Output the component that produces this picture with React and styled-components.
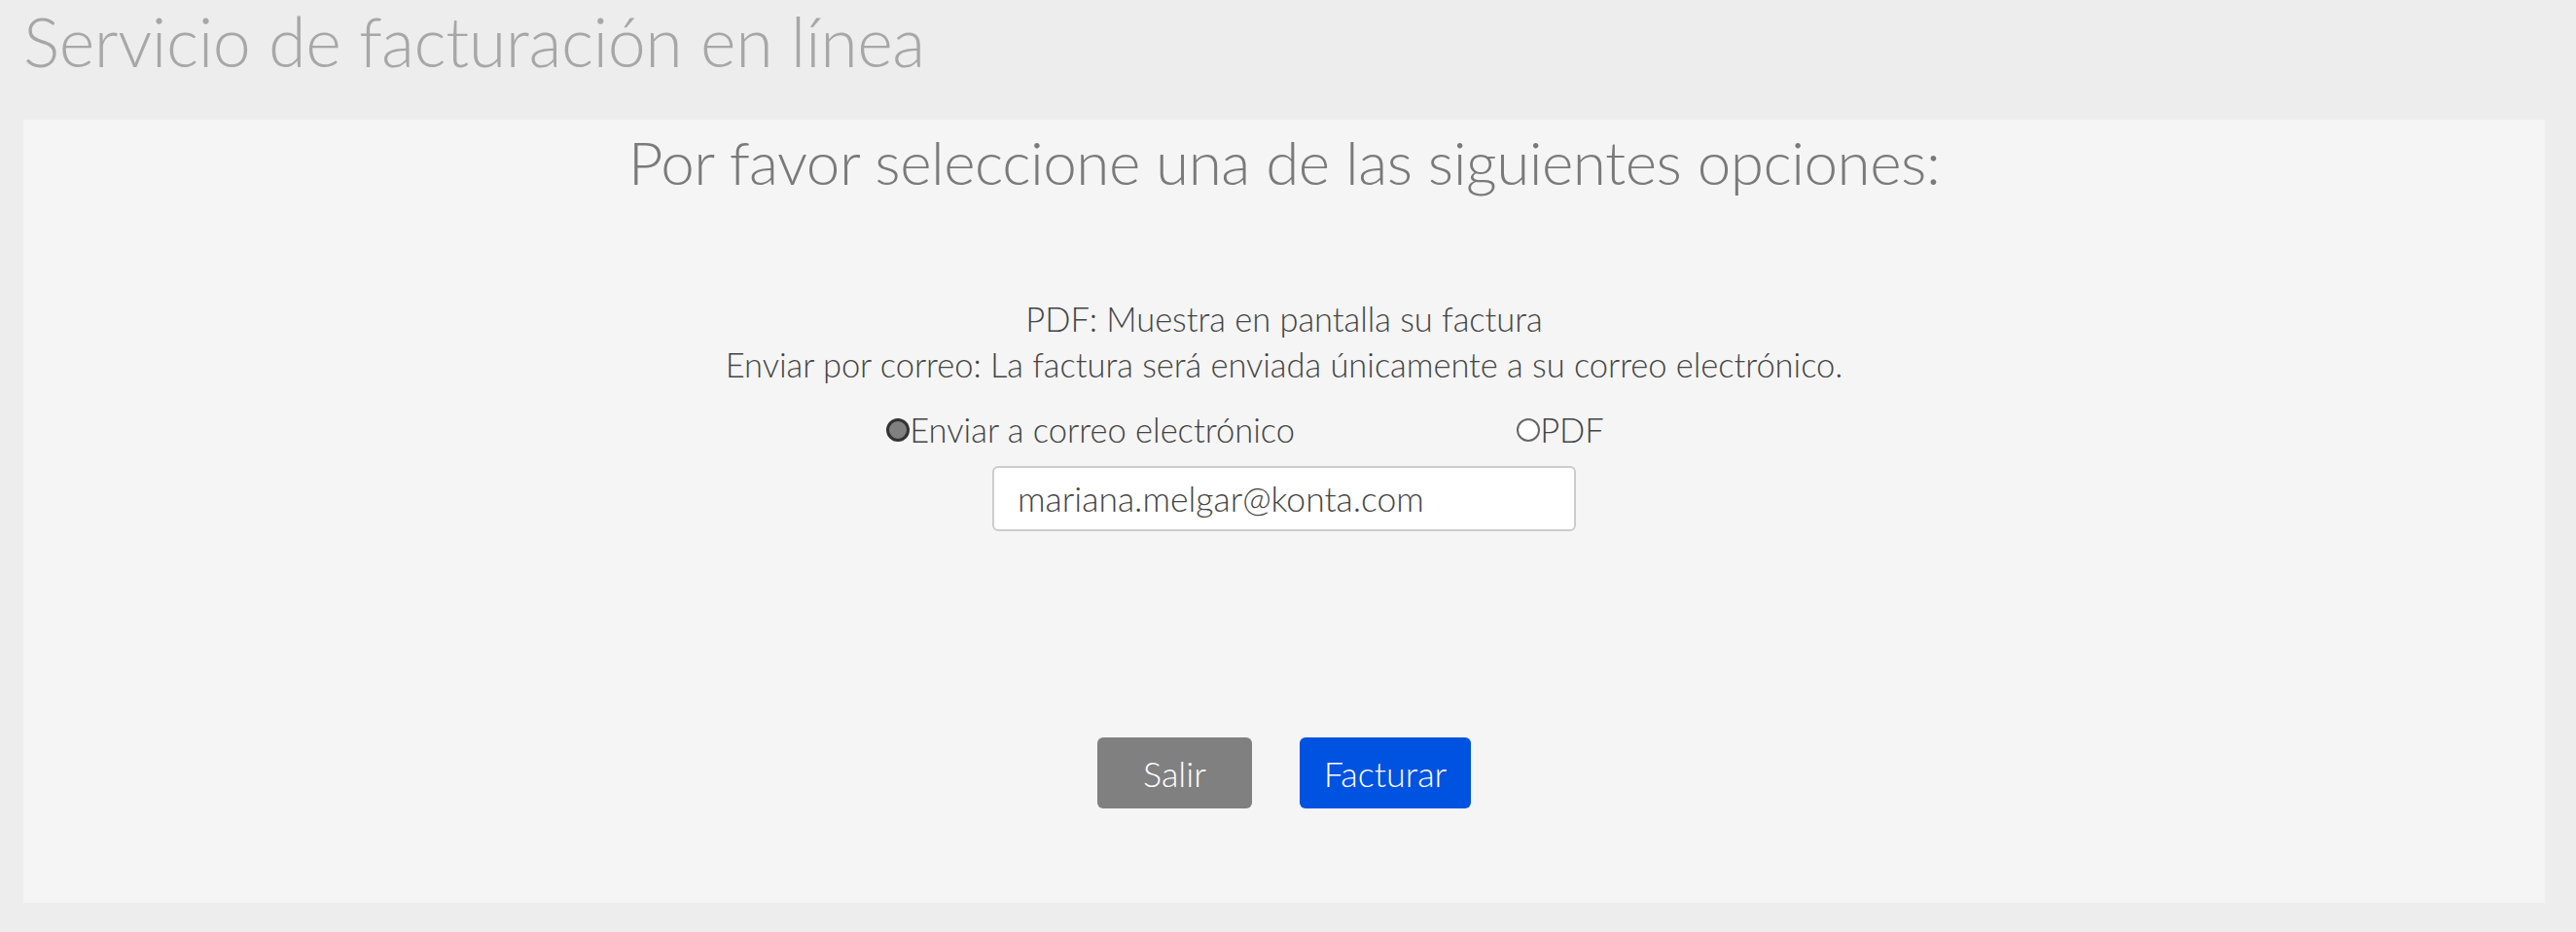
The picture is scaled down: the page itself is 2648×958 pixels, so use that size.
import React, { useState } from 'react';
import styled, { createGlobalStyle } from 'styled-components';

const GlobalStyle = createGlobalStyle`
    html, body {
        margin : 0 ;
        padding : 0 ;
        background : #ededed ;
        font-family : Lato, "Liberation Sans", sans-serif ;
    }
`

const App = () => {
    const [mode, setMode] = useState('correo');
    const [email, setEmail] = useState('mariana.melgar@konta.com');

    return (
    <>
    <GlobalStyle />
    <Page>
        <Title>Servicio de facturación en línea</Title>
        <Panel>
            <Heading>Por favor seleccione una de las siguientes opciones:</Heading>
            <Info>
                <p>PDF: Muestra en pantalla su factura</p>
                <p>Enviar por correo: La factura será enviada únicamente a su correo electrónico.</p>
            </Info>
            <Options>
                <Option>
                    <Radio type="radio" name="modo" checked={mode === 'correo'} onChange={() => setMode('correo')} />
                    Enviar a correo electrónico
                </Option>
                <Option>
                    <Radio type="radio" name="modo" checked={mode === 'pdf'} onChange={() => setMode('pdf')} />
                    PDF
                </Option>
            </Options>
            <EmailInput value={email} onChange={e => setEmail(e.target.value)} />
            <Actions>
                <ExitBtn>Salir</ExitBtn>
                <InvoiceBtn>Facturar</InvoiceBtn>
            </Actions>
        </Panel>
    </Page>
    </>
    )
}

export default App

const Page = styled.div`
    padding : 0 32px 31px 24px ;
`
const Title = styled.h1`
    margin : 0 ;
    height : 123px ;
    box-sizing : border-box ;
    font-size : 70px ;
    font-weight : 300 ;
    line-height : 84px ;
    color : #a7a7a7 ;
    letter-spacing : -0.4px ;
`
const Panel = styled.div`
    height : 805px ;
    background : #f5f5f5 ;
    display : flex ;
    flex-direction : column ;
    align-items : center ;
`
const Heading = styled.h2`
    margin : 3px 0 0 ;
    font-size : 62px ;
    font-weight : 300 ;
    line-height : 80px ;
    color : #7a7a7a ;
    letter-spacing : -0.5px ;
`
const Info = styled.div`
    margin-top : 98px ;
    text-align : center ;
    font-size : 34.5px ;
    font-weight : 300 ;
    color : #444 ;
    line-height : 47px ;
    letter-spacing : -0.05px ;

    p { margin : 0 ; }
`
const Options = styled.div`
    margin-top : 23px ;
    display : grid ;
    grid-template-columns : 648px auto ;
    padding-right : 80px ;
    font-size : 34.5px ;
    font-weight : 300 ;
    color : #444 ;
    line-height : 42px ;
`
const Option = styled.label`
    display : flex ;
    align-items : center ;
    cursor : pointer ;
`
const Radio = styled.input`
    appearance : none ;
    margin : 0 ;
    width : 24px ;
    height : 24px ;
    border-radius : 50% ;
    border : 2px solid #666 ;
    box-sizing : border-box ;
    background : #fff ;
    cursor : pointer ;

    &:checked {
        border : 3px solid #333 ;
        background : #808080 ;
    }
`
const EmailInput = styled.input`
    margin-top : 16px ;
    width : 600px ;
    height : 67px ;
    box-sizing : border-box ;
    padding : 0 24px ;
    border : 2px solid #ccc ;
    border-radius : 6px ;
    background : #fff ;
    font-family : inherit ;
    font-size : 35.5px ;
    font-weight : 300 ;
    color : #444 ;
    outline : none ;
`
const Actions = styled.div`
    margin-top : 212px ;
    display : flex ;
    gap : 49px ;
`
const Button = styled.button`
    height : 73px ;
    border : none ;
    border-radius : 6px ;
    font-family : inherit ;
    font-size : 36px ;
    font-weight : 300 ;
    color : #fff ;
    cursor : pointer ;
`
const ExitBtn = styled(Button)`
    width : 159px ;
    background : #808080 ;
`
const InvoiceBtn = styled(Button)`
    width : 176px ;
    background : #0052e0 ;
`
